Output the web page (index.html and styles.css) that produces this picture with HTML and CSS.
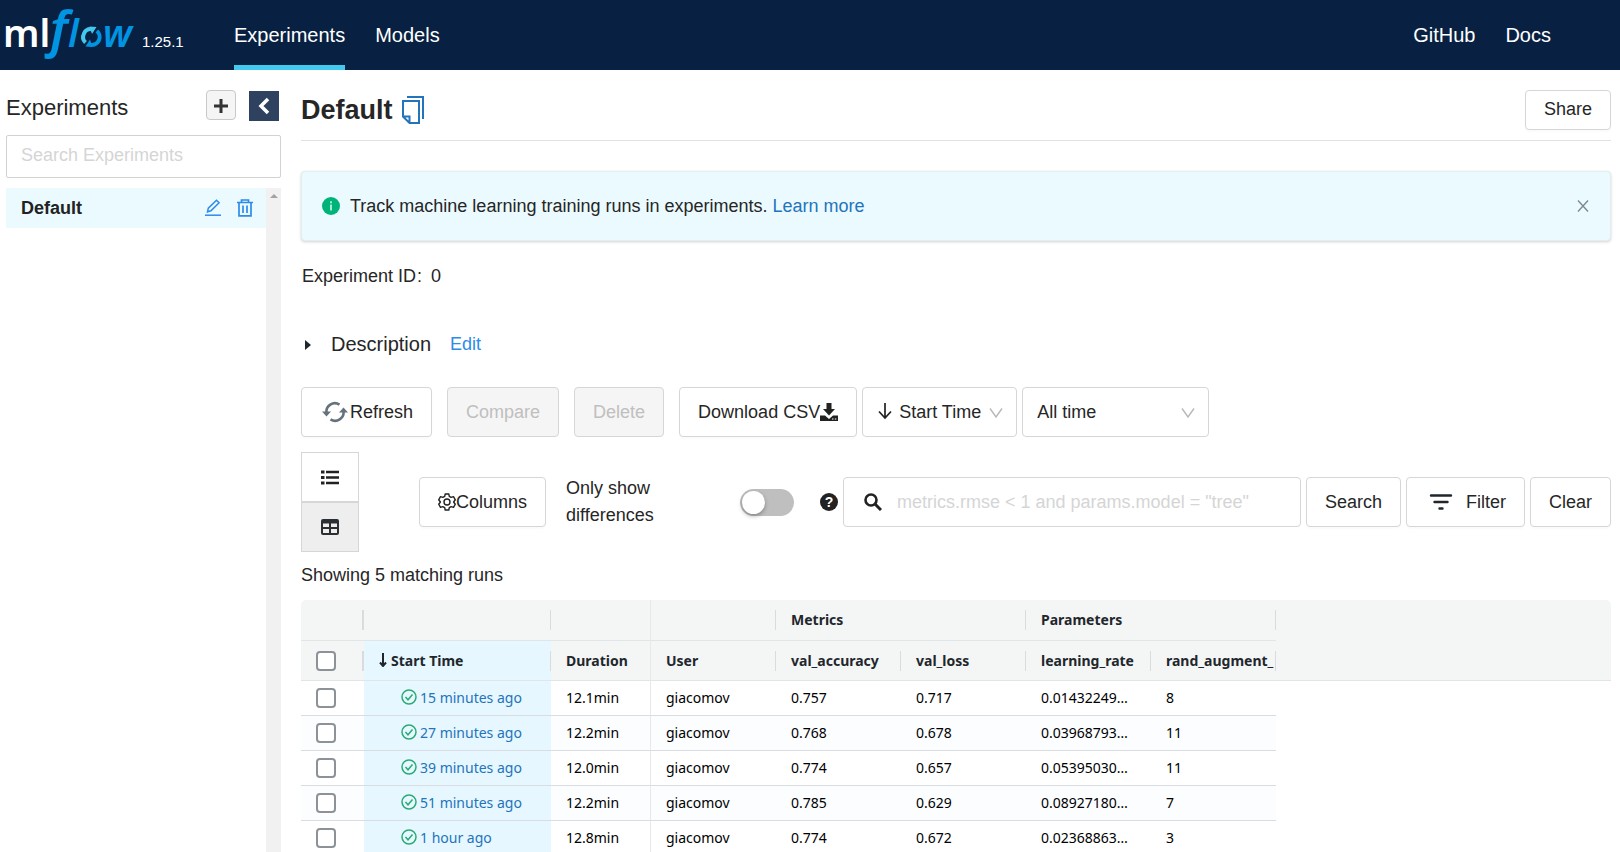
FILE: index.html
```html
<!DOCTYPE html>
<html lang="en">
<head>
<meta charset="utf-8">
<title>MLflow</title>
<link rel="stylesheet" href="styles.css">
</head>
<body>
<div class="app">
  <header class="topbar">
    <a class="brand" href="#" aria-label="mlflow home">
      <svg class="logo" width="136" height="70" viewBox="0 0 136 70">
        <g class="logo-white"><text x="3" y="47">ml</text></g>
        <g class="logo-blue">
          <text class="logo-f" x="50" y="47">f</text>
          <text x="68" y="47">l</text>
          <text x="103" y="47">w</text>
        </g>
        <path d="M85.500 42.500A7.800 7.800 0 0 1 92 29.200" fill="none" stroke="#43c9ed" stroke-width="4"/>
        <path d="M89.500 26.500l7 .5-4.500 7z" fill="#43c9ed"/>
        <path d="M96.800 31A7.800 7.800 0 0 1 90 44.600" fill="none" stroke="#0194e2" stroke-width="4"/>
        <path d="M92.500 47l-7-.5 4.500-7z" fill="#0194e2"/>
      </svg>
      <span class="version">1.25.1</span>
    </a>
    <nav class="nav">
      <a class="nav-link active" href="#">Experiments</a>
      <a class="nav-link" href="#">Models</a>
    </nav>
    <nav class="nav nav-right">
      <a class="nav-link" href="#">GitHub</a>
      <a class="nav-link" href="#">Docs</a>
    </nav>
  </header>

  <div class="content">
    <aside class="sidebar">
      <div class="side-head">
        <h2>Experiments</h2>
        <button class="add-btn" aria-label="New experiment">
          <svg width="16" height="16" viewBox="0 0 16 16"><path d="M8 2v14M1 9h14" stroke="#333" stroke-width="3"/></svg>
        </button>
        <button class="collapse-btn" aria-label="Collapse">
          <svg width="14" height="18" viewBox="0 0 14 18"><path d="M11 2L4 9l7 7" fill="none" stroke="#fff" stroke-width="3.500"/></svg>
        </button>
      </div>
      <input class="side-search" type="text" placeholder="Search Experiments" aria-label="Search experiments">
      <div class="side-list">
        <div class="side-items">
          <div class="side-item">
            <a href="#" class="side-name">Default</a>
            <button class="icon-btn" aria-label="Rename">
              <svg width="18" height="18" viewBox="0 0 18 18"><path d="M1 16.200h16" stroke="#2e8be8" stroke-width="1.500"/><path d="M3.500 12.800l.8-3.600 8.200-8 2.600 2.600-8.200 8z" fill="none" stroke="#2e8be8" stroke-width="1.500"/></svg>
            </button>
            <button class="icon-btn" aria-label="Delete experiment">
              <svg width="18" height="18" viewBox="0 0 18 18"><path d="M1 3.500h16M5.500 3.500V1h7v2.500M3 3.500v13.300h12V3.500M7 6.500V14M11 6.500V14" fill="none" stroke="#2e8be8" stroke-width="1.700"/></svg>
            </button>
          </div>
        </div>
        <div class="scroll-track"><span class="scroll-up"></span></div>
      </div>
    </aside>

    <main class="main">
      <div class="title-row">
        <h1>Default</h1>
        <button class="icon-btn" aria-label="Copy name">
          <svg width="24" height="30" viewBox="0 0 24 30"><path d="M6 2h16v22" fill="none" stroke="#2374bb" stroke-width="2"/><path d="M2 6h16v22H8.500L2 21.500zM2.500 21.500h6V27" fill="none" stroke="#2374bb" stroke-width="2"/></svg>
        </button>
        <button class="btn share-btn">Share</button>
      </div>

      <div class="alert" role="status">
        <svg width="18" height="18" viewBox="0 0 18 18"><circle cx="9" cy="9" r="9" fill="#00b379"/><path d="M9 7.500v6M9 4.200v2" stroke="#d6fff2" stroke-width="1.500"/></svg>
        <p>Track machine learning training runs in experiments. <a href="#">Learn more</a></p>
        <button class="icon-btn" aria-label="Close">
          <svg width="12" height="12" viewBox="0 0 12 12"><path d="M1 .5l10 11M11 .5L1 11.500" stroke="#7d868a" stroke-width="1.300"/></svg>
        </button>
      </div>

      <p class="exp-id"><span>Experiment ID</span><span class="colon">:</span><span>0</span></p>

      <div class="desc-row">
        <svg width="8" height="12" viewBox="0 0 8 12"><path d="M1 1l6 5-6 5z" fill="#1f272d"/></svg>
        <h3>Description</h3>
        <a href="#">Edit</a>
      </div>

      <div class="actions">
        <button class="btn refresh-btn">
          <svg width="26" height="22" viewBox="0 0 26 22"><path d="M4.500 12A8.500 8.500 0 0 1 17.500 3.600M21.500 10A8.500 8.500 0 0 1 8.500 18.400" fill="none" stroke="#65727d" stroke-width="2.600"/><path d="M0 10.500h9L4.500 15.500zM17 11.500h9L21.500 6.500z" fill="#65727d"/></svg>Refresh</button>
        <button class="btn" disabled>Compare</button>
        <button class="btn" disabled>Delete</button>
        <div class="tight">
          <button class="btn">Download CSV<svg width="18" height="18" viewBox="0 0 18 18"><path d="M6.500 0h5v6H15l-6 6.500L3 6h3.500zM0 12.500h5l4 3.500 4-3.500h5V18H0z" fill="#222"/><path d="M12 16h1.500M14.800 16h1.500" stroke="#fff" stroke-width="1"/></svg></button>
          <div class="select sort-select">
            <svg class="lead" width="16" height="18" viewBox="0 0 16 18"><path d="M8 1v15M2 9.500L8 16l6-6.500" fill="none" stroke="#222" stroke-width="1.700"/></svg>
            <select aria-label="Sort by"><option>Start Time</option></select>
            <svg class="chev" width="14" height="10" viewBox="0 0 14 10"><path d="M1 .5L7 9l6-8.500" fill="none" stroke="#b8b8b8" stroke-width="1.400"/></svg>
          </div>
          <div class="select time-select">
            <select aria-label="Time range"><option>All time</option></select>
            <svg class="chev" width="14" height="10" viewBox="0 0 14 10"><path d="M1 .5L7 9l6-8.500" fill="none" stroke="#b8b8b8" stroke-width="1.400"/></svg>
          </div>
        </div>
      </div>

      <div class="filters">
        <div class="views">
          <button class="view-btn" aria-label="List view">
            <svg width="18" height="15" viewBox="0 0 18 15"><path d="M5 2h13M5 7.500h13M5 13h13" stroke="#222" stroke-width="2.400"/><path d="M0 2h3.500M0 7.500h3.500M0 13h3.500" stroke="#222" stroke-width="3.200"/></svg>
          </button>
          <button class="view-btn selected" aria-label="Grid view">
            <svg width="18" height="16" viewBox="0 0 18 16"><path fill-rule="evenodd" d="M2 0h14a2 2 0 0 1 2 2v12a2 2 0 0 1-2 2H2a2 2 0 0 1-2-2V2a2 2 0 0 1 2-2zM2 4.500v3.500h6V4.500zM10 4.500v3.500h6V4.500zM2 10v4h6v-4zM10 10v4h6v-4z" fill="#2b2f33"/></svg>
          </button>
        </div>
        <button class="btn columns-btn">
          <svg width="18" height="18" viewBox="0 0 18 18"><path d="M7.200 1h3.600l.5 2.300 1.900 1.100 2.300-.7 1.800 3.100L15.600 9l1.700 2.200-1.800 3.100-2.300-.7-1.900 1.100-.5 2.300H7.200l-.5-2.300-1.900-1.100-2.300.7-1.800-3.100L2.400 9 .7 6.800l1.800-3.100 2.300.7 1.900-1.100z" fill="none" stroke="#222" stroke-width="1.400" stroke-linejoin="round"/><circle cx="9" cy="9" r="3" fill="none" stroke="#222" stroke-width="1.400"/></svg>Columns</button>
        <label class="diff-label" for="diff">Only show differences</label>
        <input class="switch" type="checkbox" role="switch" id="diff">
        <div class="tight search-group">
          <span class="help">?</span>
          <div class="run-search">
            <svg width="18" height="18" viewBox="0 0 18 18"><circle cx="7" cy="7" r="5.500" fill="none" stroke="#222" stroke-width="2.600"/><path d="M11 11l6 6" stroke="#222" stroke-width="3"/></svg>
            <input type="text" placeholder='metrics.rmse &lt; 1 and params.model = "tree"' aria-label="Search runs">
          </div>
          <button class="btn">Search</button>
          <button class="btn filter-btn"><svg width="24" height="16" viewBox="0 0 24 16"><path d="M2 1.500h20M5.500 8h13M10.500 14.500h3" stroke="#1f272d" stroke-width="2.400" stroke-linecap="round"/></svg>Filter</button>
          <button class="btn">Clear</button>
        </div>
      </div>

      <p class="count">Showing 5 matching runs</p>

      <div class="grid-wrap">
        <table class="runs">
          <colgroup>
            <col class="c-check"><col class="c-start"><col class="c-dur"><col class="c-std"><col class="c-std"><col class="c-std"><col class="c-std"><col class="c-std"><col>
          </colgroup>
          <thead>
            <tr class="groups">
              <th class="sep thick"></th><th class="sep"></th><th class="pin"></th><th class="sep"></th>
              <th class="sep" colspan="2">Metrics</th><th class="sep" colspan="2">Parameters</th><th class="fill"></th>
            </tr>
            <tr>
              <th class="sep thick"><input type="checkbox" aria-label="Select all runs"></th>
              <th class="sep sorted"><svg width="8" height="14" viewBox="0 0 8 14"><path d="M4 0v12M1 9.500L4 13l3-3.500" fill="none" stroke="#1f272d" stroke-width="2"/></svg>Start Time</th>
              <th class="pin">Duration</th><th class="sep">User</th><th class="sep">val_accuracy</th><th class="sep">val_loss</th><th class="sep">learning_rate</th><th class="sep">rand_augment_</th><th class="fill"></th>
            </tr>
          </thead>
          <tbody>
            <tr><td><input type="checkbox" aria-label="Select run 1"></td><td class="start"><svg width="16" height="16" viewBox="0 0 16 16"><circle cx="8" cy="8" r="7"/><path d="M4.500 8l2.500 2.800L11.500 5.500"/></svg><a href="#">15 minutes ago</a></td><td class="pin">12.1min</td><td>giacomov</td><td>0.757</td><td>0.717</td><td>0.01432249…</td><td>8</td><td class="fill"></td></tr>
            <tr><td><input type="checkbox" aria-label="Select run 2"></td><td class="start"><svg width="16" height="16" viewBox="0 0 16 16"><circle cx="8" cy="8" r="7"/><path d="M4.500 8l2.500 2.800L11.500 5.500"/></svg><a href="#">27 minutes ago</a></td><td class="pin">12.2min</td><td>giacomov</td><td>0.768</td><td>0.678</td><td>0.03968793…</td><td>11</td><td class="fill"></td></tr>
            <tr><td><input type="checkbox" aria-label="Select run 3"></td><td class="start"><svg width="16" height="16" viewBox="0 0 16 16"><circle cx="8" cy="8" r="7"/><path d="M4.500 8l2.500 2.800L11.500 5.500"/></svg><a href="#">39 minutes ago</a></td><td class="pin">12.0min</td><td>giacomov</td><td>0.774</td><td>0.657</td><td>0.05395030…</td><td>11</td><td class="fill"></td></tr>
            <tr><td><input type="checkbox" aria-label="Select run 4"></td><td class="start"><svg width="16" height="16" viewBox="0 0 16 16"><circle cx="8" cy="8" r="7"/><path d="M4.500 8l2.500 2.800L11.500 5.500"/></svg><a href="#">51 minutes ago</a></td><td class="pin">12.2min</td><td>giacomov</td><td>0.785</td><td>0.629</td><td>0.08927180…</td><td>7</td><td class="fill"></td></tr>
            <tr><td><input type="checkbox" aria-label="Select run 5"></td><td class="start"><svg width="16" height="16" viewBox="0 0 16 16"><circle cx="8" cy="8" r="7"/><path d="M4.500 8l2.500 2.800L11.500 5.500"/></svg><a href="#">1 hour ago</a></td><td class="pin">12.8min</td><td>giacomov</td><td>0.774</td><td>0.672</td><td>0.02368863…</td><td>3</td><td class="fill"></td></tr>
          </tbody>
        </table>
      </div>
    </main>
  </div>
</div>
</body>
</html>
```

FILE: styles.css
```css
* { box-sizing: border-box; }
body {
  margin: 0;
  font: 18px/27px "Liberation Sans", Arial, sans-serif;
  color: #262626;
  background: #fff;
}
h1, h2, h3, p { margin: 0; font-weight: 400; }
a { color: #2374bb; text-decoration: none; }
button, input, select { font: inherit; color: inherit; margin: 0; }
svg { flex: none; display: block; }

.app { height: 100vh; display: flex; flex-direction: column; overflow: hidden; }

.topbar { display: flex; height: 70px; flex: none; background: #082142; padding-right: 69px; }
.brand { display: flex; width: 234px; color: #fff; }
.logo { font: 600 38px "Noto Sans", "Open Sans", sans-serif; overflow: visible; }
.logo-white { fill: #fff; }
.logo-blue { fill: #0194e2; font-style: italic; }
.logo-f { font-size: 50px; font-weight: 600; }
.version { font-size: 15px; padding: 28px 0 0 6px; }
.nav { display: flex; gap: 30px; }
.nav-right { margin-left: auto; }
.nav-link { display: flex; align-items: center; font-size: 20px; color: #fff; border-bottom: 5px solid transparent; padding-top: 5px; }
.nav-link.active { border-color: #43c9ed; }

.content { flex: 1; min-height: 0; display: flex; gap: 20px; padding: 0 9px 0 6px; }

.sidebar { width: 275px; flex: none; display: flex; flex-direction: column; padding-top: 20px; }
.side-head { display: flex; gap: 13px; padding-right: 2px; align-items: flex-start; height: 45px; }
.side-head h2 { flex: 1; font-size: 22px; line-height: 36px; }
.add-btn, .collapse-btn { width: 30px; height: 30px; padding: 0; display: flex; align-items: center; justify-content: center; }
.add-btn { background: #f5f5f5; border: 1px solid #c9c9c9; border-radius: 4px; }
.collapse-btn { background: #2e4260; border: 0; margin-top: 1px; }
.side-search { width: 100%; height: 43px; border: 1px solid #d2d2d2; border-radius: 2px; padding: 0 14px 2px; }
::placeholder { color: #d5d5d5; opacity: 1; }
.side-list { flex: 1; min-height: 0; margin-top: 10px; display: flex; }
.side-items { flex: 1; }
.side-item { display: flex; align-items: center; gap: 14px; height: 40px; padding: 0 12px 0 15px; background: #ebfaff; }
.side-name { flex: 1; color: #222; font-weight: 700; }
.icon-btn { border: 0; background: none; padding: 0; }
.scroll-track { width: 15px; background: #f1f1f1; display: flex; justify-content: center; padding-top: 6px; }
.scroll-up { width: 0; height: 0; border: 4px solid transparent; border-top: 0; border-bottom-color: #a3a3a3; }

.main { flex: 1; min-width: 0; padding-top: 20px; }
.title-row { display: flex; align-items: center; gap: 8px; height: 51px; padding-bottom: 10px; border-bottom: 1px solid #e2e2e2; }
.title-row h1 { font-size: 27px; font-weight: 700; }

.btn {
  display: flex; align-items: center; justify-content: center;
  height: 50px; padding: 0 18px; white-space: nowrap;
  background: #fff; border: 1px solid #d6d6d6; border-radius: 4px;
  box-shadow: 0 2px 2px rgba(0, 0, 0, .02);
}
.btn:disabled { background: #f5f5f5; color: #bfbfbf; box-shadow: none; }
.btn.share-btn { height: 40px; margin-left: auto; padding-bottom: 2px; }

.alert {
  display: flex; align-items: center; gap: 10px; height: 70px; margin-top: 30px; padding: 0 21px 0 20px;
  background: #ebfaff; border: 1px solid #e4edf0; border-radius: 4px; box-shadow: 0 1px 3px rgba(0, 0, 0, .18);
}
.alert p { flex: 1; }

.exp-id { display: flex; padding: 22px 0 0 1px; }
.colon { width: 15px; padding-left: 1px; }
.desc-row { display: flex; align-items: center; gap: 19px; margin: 41px 0 29px 3px; }
.desc-row h3 { font-size: 20px; }
.desc-row a { color: #2e8be8; }

.actions { display: flex; gap: 15px; }
.tight { display: flex; align-items: center; gap: 5px; }
.refresh-btn { padding-left: 20px; gap: 2px; }
.select { position: relative; height: 50px; }
.select select { appearance: none; width: 100%; height: 100%; background: #fff; border: 1px solid #d6d6d6; border-radius: 4px; padding: 0 14px; }
.sort-select { width: 155px; }
.sort-select .lead + select { padding-left: 36px; }
.time-select { width: 187px; }
.lead { position: absolute; left: 15px; top: 15px; }
.chev { position: absolute; right: 14px; top: 21px; }

.filters { display: flex; align-items: center; margin-top: 15px; }
.views { width: 118px; }
.view-btn { display: flex; align-items: center; justify-content: center; width: 58px; height: 50px; padding: 0; background: #fff; border: 1px solid #d6d6d6; }
.view-btn.selected { background: #eee; }
.diff-label { box-sizing: content-box; width: 104px; padding: 0 70px 0 20px; }
.switch { appearance: none; flex: none; width: 54px; height: 27px; border-radius: 14px; background: #bfbfbf; padding: 2px; }
.switch::before { content: ""; display: block; width: 23px; height: 23px; border-radius: 50%; background: #fff; box-shadow: 0 2px 4px rgba(0, 0, 0, .3); }
.search-group { flex: 1; margin-left: 26px; }
.help { width: 18px; height: 18px; flex: none; border-radius: 50%; background: #222; color: #fff; font-size: 14px; font-weight: 700; line-height: 18px; text-align: center; }
.run-search { flex: 1; display: flex; align-items: center; gap: 15px; height: 50px; padding-left: 20px; border: 1px solid #d6d6d6; border-radius: 4px; }
.run-search input { flex: 1; min-width: 0; border: 0; outline: 0; padding: 0; }
.btn.filter-btn { gap: 13px; padding-left: 22px; }
.count { margin: 10px 0 11px; }

.grid-wrap { border-radius: 5px 5px 0 0; overflow: hidden; }
.runs { width: 100%; table-layout: fixed; border-collapse: separate; border-spacing: 0; font: 14px/20px "Noto Sans", "Open Sans", sans-serif; color: #000; }
.c-check { width: 63px; }
.c-start { width: 187px; }
.c-dur { width: 100px; }
.c-std { width: 125px; }
.runs th, .runs td { text-align: left; padding: 0 0 0 15px; white-space: nowrap; }
.runs th { position: relative; height: 40px; background: #f4f6f6; color: #1f272d; font-weight: 700; border-bottom: 1px solid #e2e5e6; }
.runs .groups th { height: 41px; }
.runs .groups .fill { border-bottom-color: #f4f6f6; }
.runs td { height: 35px; border-bottom: 1px solid #d9dce0; }
.runs tbody tr:nth-child(even) td { background: #fbfdff; }
.runs tbody .fill { border: 0; background: #fff !important; }
.sep::after { content: ""; position: absolute; right: 0; top: 10px; width: 1px; height: 20px; background: #d9dcde; }
.thick::after { width: 2px; }
.runs .pin { border-right: 1px solid #e6e9ea; }
.runs .sorted, .runs tbody .start, .runs tbody tr:nth-child(even) .start { background: #e6f7ff; }
.sorted svg { display: inline-block; margin-right: 4px; vertical-align: -1px; }
.start svg { display: inline-block; margin: 0 3px 0 22px; vertical-align: -2px; fill: none; stroke: #2bab74; stroke-width: 1.5; }
.runs input { appearance: none; display: block; width: 20px; height: 20px; border: 2px solid #8c9297; border-radius: 4px; background: #fff; }
```
